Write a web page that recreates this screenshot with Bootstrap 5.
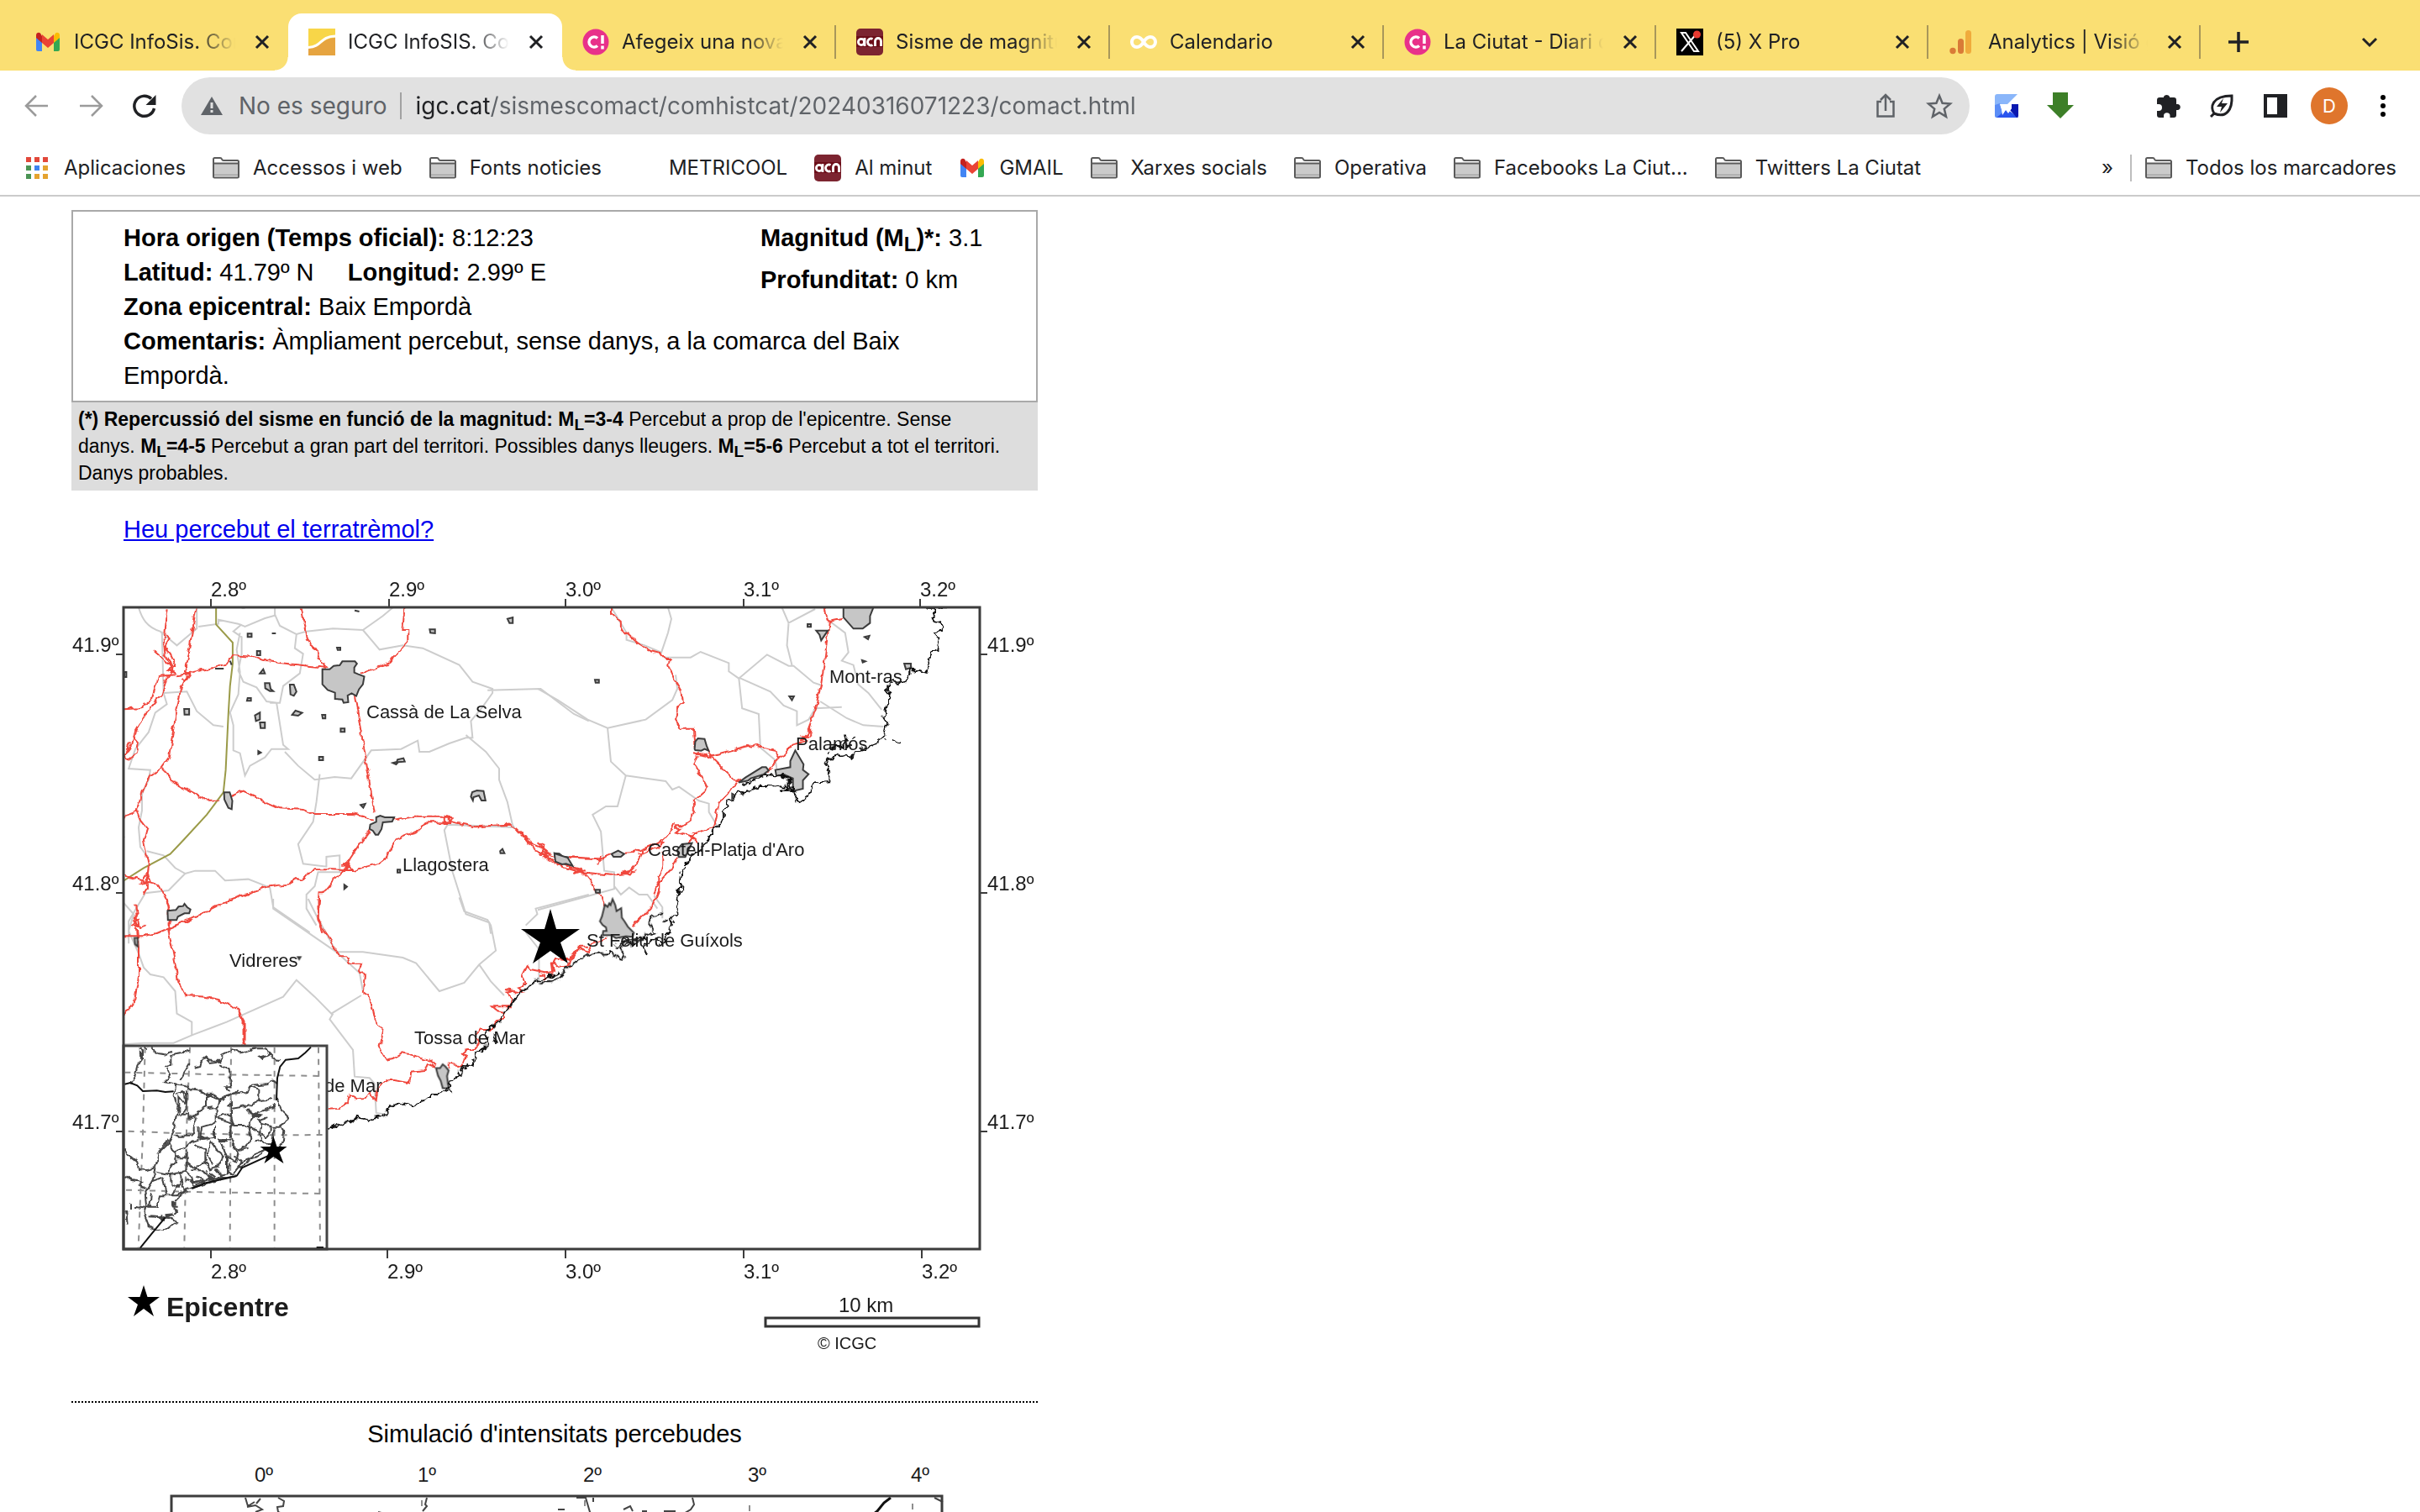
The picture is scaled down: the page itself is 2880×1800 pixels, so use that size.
<!DOCTYPE html>
<html lang="ca">
<head>
<meta charset="utf-8">
<meta name="viewport" content="width=device-width, initial-scale=1">
<title>ICGC InfoSIS. Comunicat</title>
<link href="https://cdn.jsdelivr.net/npm/bootstrap@5.3.0/dist/css/bootstrap.min.css" rel="stylesheet">
<script src="https://cdn.jsdelivr.net/npm/bootstrap@5.3.0/dist/js/bootstrap.bundle.min.js"></script>
<style>
  body { font-family: Inter, Roboto, sans-serif; font-size: 24px; color: #202124; background: #fff; }
  svg { display: block; flex-shrink: 0; }
  button { border: 0; background: none; padding: 0; color: inherit; }
  .ico { width: 32px; height: 32px; }

  /* tab strip */
  .tabstrip { background: #fadf73; height: 84px; padding: 16px 0 0 17px; }
  .tab { position: relative; width: 326px; height: 68px; padding: 0 15px 0 24px; gap: 16px; flex: 0 1 auto; }
  .tab:nth-child(n+6) { width: 324px; }
  .tab-link { flex: 1 1 0; min-width: 0; gap: 15px; color: #202124; text-decoration: none; }
  .tab-label { flex: 1 1 0; min-width: 0; overflow: hidden; white-space: nowrap; line-height: 32px;
    -webkit-mask-image: linear-gradient(to right, #000 76%, transparent); mask-image: linear-gradient(to right, #000 76%, transparent); }
  .tab.lined::after { content: ""; position: absolute; right: 0; top: 14px; width: 2px; height: 40px; background: #a8975a; }
  .tab.current { background: #fff; border-radius: 16px 16px 0 0; }
  .tab.current::before, .tab.current::after { content: ""; position: absolute; bottom: 0; width: 16px; height: 16px; }
  .tab.current::before { left: -16px; background: radial-gradient(circle at 0 0, transparent 15px, #fff 16px); }
  .tab.current::after { right: -16px; background: radial-gradient(circle at 100% 0, transparent 15px, #fff 16px); }
  .newtab { width: 90px; }
  .tabmenu { padding-right: 44px; }

  /* toolbar */
  .toolbar { height: 84px; padding: 0 12px; }
  .tool { width: 64px; height: 64px; display: flex; align-items: center; justify-content: center; }
  .omnibox { background: #e1e1e1; height: 68px; border-radius: 34px; padding: 0 4px 0 20px; margin: 0 12px; min-width: 0; }
  .security { color: #5f6368; gap: 16px; font-size: 28px; padding-right: 16px; border-right: 2px solid #a2a2a2; line-height: 32px; }
  .address { flex: 1 1 0; min-width: 0; border: 0; outline: 0; padding: 0; margin-left: 16px; font-size: 28px; line-height: 40px;
    background: linear-gradient(to right, #202124 88px, #5f6368 88px); -webkit-background-clip: text; background-clip: text; -webkit-text-fill-color: transparent; }
  .avatar { width: 44px; height: 44px; border-radius: 50%; background: #df752c; color: #fff; font-size: 22px; line-height: 44px; text-align: center; }

  /* bookmarks */
  .bookmarks { height: 66px; padding: 0 28px; gap: 32px; border-bottom: 2px solid #cbcbcb; }
  .mark-link { gap: 16px; color: #202124; text-decoration: none; white-space: nowrap; line-height: 32px; }
  .all-marks { border-left: 2px solid #bdbdbd; padding-left: 16px; margin-left: -12px; }

  /* report */
  .report { font-family: "Liberation Sans", Arial, sans-serif; font-size: 29px; line-height: 41px; color: #000; max-width: 1150px; margin: 16px 0 0 85px; }
  .report sub { font-size: 24px; bottom: -6px; }
  .facts { border: 2px solid #a9a9a9; padding: 11px 60px 9px; }
  .facts p { margin: 0; }
  .second { width: 268px; gap: 9px; }
  .scale-note { background: #ddd; font-size: 23px; line-height: 32px; padding: 4px 8px 5px; margin: 0; }
  .scale-note sub { font-size: 19px; bottom: -5px; }
  .report a { color: #0000ee; }
  .felt { margin: 26px 0 29px 62px; }
  .report svg { width: 100%; height: auto; }
  .report svg text { font-family: "Liberation Sans", Arial, sans-serif; fill: #1c1c1c; }
  .simulation { border-top: 2px dotted #000; margin-top: 48px; padding-top: 17px; text-align: center; }
  .simulation h2 { font-size: 29px; line-height: 41px; font-weight: 400; margin: 0 0 10px; }
  .axis { font-size: 24px; }
  .town { font-size: 22px; }
  .ln path { fill: none; vector-effect: non-scaling-stroke; }
  .com path { stroke: #cdcdcd; stroke-width: 2; }
  .road path { stroke: #f0463c; stroke-width: 2; }
  .rail path { stroke: #9a9a48; stroke-width: 2; }
  .coast path { stroke: #111; stroke-width: 2; }
  .urban path { fill: #c6c6c6; stroke: #3c3c3c; stroke-width: 2; }
  .inner path { stroke: #444; stroke-width: 2; }
  .grid-dash path { stroke: #8e8e8e; stroke-width: 2; stroke-dasharray: 7 7; }
</style>
</head>
<body>
<svg width="0" height="0" class="position-absolute" aria-hidden="true">
  <defs>
    <filter id="ragged" x="0" y="0" width="1" height="1"><feTurbulence type="fractalNoise" baseFrequency=".12" numOctaves="2" seed="4" result="n"/><feDisplacementMap in="SourceGraphic" in2="n" scale="11" xChannelSelector="R" yChannelSelector="G"/></filter>
    <filter id="uneven" x="0" y="0" width="1" height="1"><feTurbulence type="fractalNoise" baseFrequency=".1" numOctaves="2" seed="9" result="n"/><feDisplacementMap in="SourceGraphic" in2="n" scale="7" xChannelSelector="R" yChannelSelector="G"/></filter>
    <symbol id="i-x" viewBox="0 0 32 32"><path d="M9 9l14 14M23 9L9 23" stroke="#202124" stroke-width="3" fill="none"/></symbol>
    <symbol id="i-gmail" viewBox="0 0 32 32">
      <path d="M2 10v15a2 2 0 0 0 2 2h5V14z" fill="#4285f4"/><path d="M30 10v15a2 2 0 0 1-2 2h-5V14z" fill="#34a853"/>
      <path d="M23 9v8l7-6V8c0-3-3-4-5-2.500z" fill="#fbbc04"/><path d="M9 9v8l-7-6V8c0-3 3-4 5-2.500z" fill="#c5221f"/><path d="M9 17V7l7 6 7-6v10l-7 6z" fill="#ea4335"/>
    </symbol>
    <symbol id="i-icgc" viewBox="0 0 32 32"><path d="M0 0h32v32H0z" fill="#f8d648"/><path d="M0 23c18-1 14-11 32-12v21H0z" fill="#e6a440"/><path d="M0 22.500c17-1 13-13 32-13.500" stroke="#fff" stroke-width="3" fill="none"/></symbol>
    <symbol id="i-ciutat" viewBox="0 0 32 32"><circle cx="16" cy="16" r="15.500" fill="#e8318a"/><path d="M18 11.500a6 6 0 1 0 0 9" stroke="#fff" stroke-width="3.500" fill="none"/><path d="M24 8v10M24 20.500v4" stroke="#fff" stroke-width="3.500"/></symbol>
    <symbol id="i-acn" viewBox="0 0 32 32"><rect width="32" height="32" rx="5" fill="#7c2430"/><path d="M0 9h32v13H0z" fill="#6b0d18"/><g stroke="#fff" stroke-width="2.800" fill="none"><circle cx="6" cy="16" r="3.600"/><path d="M10 11v10M19.500 12.500a4 4 0 1 0 0 7M22.500 21v-6a3.400 3.400 0 0 1 7 0v6"/></g></symbol>
    <symbol id="i-inf" viewBox="0 0 32 32"><path d="M16 16c-3-5-5-6-8-6a6 6 0 0 0 0 12c3 0 5-1 8-6s5-6 8-6a6 6 0 0 1 0 12c-3 0-5-1-8-6z" fill="none" stroke="#fff" stroke-width="4"/></symbol>
    <symbol id="i-xpro" viewBox="0 0 32 32"><path d="M0 0h32v32H0z"/><path d="M6 5h5l15 22h-5zM25 5L6 27" fill="none" stroke="#fff" stroke-width="2"/><circle cx="24.500" cy="7" r="4.500" fill="#e83a30"/></symbol>
    <symbol id="i-ga" viewBox="0 0 32 32"><rect x="20" y="2" width="7" height="28" rx="3.500" fill="#f0ab3c"/><rect x="11" y="12" width="7" height="18" rx="3.500" fill="#d97b37"/><circle cx="5" cy="26.500" r="3.700" fill="#d97b37"/></symbol>
    <symbol id="i-folder" viewBox="0 0 32 32"><path d="M1 26V4h9l4 4h17v18z" fill="#fff"/><path d="M2 11h28v14H2z" fill="#cbcbcb"/><path d="M1 10.500h30M1 24V5.500q0-1.500 1.500-1.500H9q1.500 0 2 1.500t2 1.500h16.500Q31 7 31 8.500V26q0 1.500-1.500 1.500h-27Q1 27.500 1 26z" fill="none" stroke="#5a5a5a" stroke-width="2"/><path d="M2 24.500h28" stroke="#a5a5a5" stroke-width="2"/></symbol>
  </defs>
</svg>

<div class="d-flex flex-column vh-100 overflow-hidden">
<header>
  <nav class="tabstrip d-flex" aria-label="Pestanyes">
    <div class="tab d-flex align-items-center"><a href="#" class="tab-link d-flex align-items-center"><svg class="ico"><use href="#i-gmail"/></svg><span class="tab-label">ICGC InfoSis. Comunicat</span></a><button aria-label="Tanca"><svg class="ico"><use href="#i-x"/></svg></button></div>
    <div class="tab current d-flex align-items-center"><a href="#" class="tab-link d-flex align-items-center"><svg class="ico"><use href="#i-icgc"/></svg><span class="tab-label">ICGC InfoSIS. Comunicat</span></a><button aria-label="Tanca"><svg class="ico"><use href="#i-x"/></svg></button></div>
    <div class="tab lined d-flex align-items-center"><a href="#" class="tab-link d-flex align-items-center"><svg class="ico"><use href="#i-ciutat"/></svg><span class="tab-label">Afegeix una nova entrada</span></a><button aria-label="Tanca"><svg class="ico"><use href="#i-x"/></svg></button></div>
    <div class="tab lined d-flex align-items-center"><a href="#" class="tab-link d-flex align-items-center"><svg class="ico"><use href="#i-acn"/></svg><span class="tab-label">Sisme de magnitud</span></a><button aria-label="Tanca"><svg class="ico"><use href="#i-x"/></svg></button></div>
    <div class="tab lined d-flex align-items-center"><a href="#" class="tab-link d-flex align-items-center"><svg class="ico"><use href="#i-inf"/></svg><span class="tab-label">Calendario</span></a><button aria-label="Tanca"><svg class="ico"><use href="#i-x"/></svg></button></div>
    <div class="tab lined d-flex align-items-center"><a href="#" class="tab-link d-flex align-items-center"><svg class="ico"><use href="#i-ciutat"/></svg><span class="tab-label">La Ciutat - Diari digital</span></a><button aria-label="Tanca"><svg class="ico"><use href="#i-x"/></svg></button></div>
    <div class="tab lined d-flex align-items-center"><a href="#" class="tab-link d-flex align-items-center"><svg class="ico"><use href="#i-xpro"/></svg><span class="tab-label">(5) X Pro</span></a><button aria-label="Tanca"><svg class="ico"><use href="#i-x"/></svg></button></div>
    <div class="tab lined d-flex align-items-center"><a href="#" class="tab-link d-flex align-items-center"><svg class="ico"><use href="#i-ga"/></svg><span class="tab-label">Analytics | Visió general</span></a><button aria-label="Tanca"><svg class="ico"><use href="#i-x"/></svg></button></div>
    <button class="newtab d-flex align-items-center justify-content-center" aria-label="Pestanya nova"><svg class="ico" viewBox="0 0 32 32"><path d="M16 4v24M4 16h24" stroke="#202124" stroke-width="3.500"/></svg></button>
    <button class="tabmenu ms-auto" aria-label="Cerca pestanyes"><svg class="ico" viewBox="0 0 32 32"><path d="M8 12l8 8 8-8" stroke="#202124" stroke-width="3" fill="none"/></svg></button>
  </nav>

  <div class="toolbar d-flex align-items-center">
    <button class="tool" aria-label="Enrere"><svg class="ico" viewBox="0 0 32 32"><path d="M29 16H4M15 4L3 16l12 12" stroke="#9b9b9b" stroke-width="2.500" fill="none"/></svg></button>
    <button class="tool" aria-label="Endavant"><svg class="ico" viewBox="0 0 32 32"><path d="M3 16h25M17 4l12 12-12 12" stroke="#9b9b9b" stroke-width="2.500" fill="none"/></svg></button>
    <button class="tool" aria-label="Actualitza"><svg class="ico" viewBox="0 0 32 32"><path d="M27.500 19A12 12 0 1 1 24 7.500" stroke="#202124" stroke-width="3.500" fill="none"/><path d="M29.500 3v12h-12z" fill="#202124"/></svg></button>
    <form class="omnibox d-flex align-items-center flex-grow-1" onsubmit="return false">
      <button type="button" class="security d-flex align-items-center"><svg class="ico" viewBox="0 0 32 32"><path d="M16 5l13 22H3z" fill="#5f6368"/><path d="M16 12v7M16 21v3" stroke="#e1e1e1" stroke-width="3"/></svg>No es seguro</button>
      <input class="address" type="text" aria-label="Adreça" value="igc.cat/sismescomact/comhistcat/20240316071223/comact.html">
      <button type="button" class="tool" aria-label="Comparteix"><svg class="ico" viewBox="0 0 32 32"><path d="M11 11H6.500v17.500h19V11H21M16 22V4M10 9l6-6 6 6" stroke="#5f6368" stroke-width="2.500" fill="none"/></svg></button>
      <button type="button" class="tool" aria-label="Adreça d'interès"><svg class="ico" viewBox="0 0 32 32"><path d="M16 4l3.600 8.700 9.400.8-7.200 6.100 2.200 9.200-8-4.900-8 4.900 2.200-9.200L3 13.500l9.400-.8z" stroke="#5f6368" stroke-width="2.500" fill="none"/></svg></button>
    </form>
    <button class="tool" aria-label="Extensió"><svg class="ico" viewBox="0 0 32 32"><path d="M2 5q0-3 3-3h24L17 14H9L2 19z" fill="#8ab6fa"/><path d="M2 15l6-2 4 14-6 3H4q-2 0-2-2z" fill="#5b8df6"/><path d="M4 30l12-10 6 4 8 6z" fill="#2a55ee"/><path d="M20 14h10v14q0 2-2 2l-8-9 2-2z" fill="#0a18b0"/><path d="M8 14h10l4 0 0 5-4 6-3-4-4 6-1-7z" fill="#fff"/></svg></button>
    <button class="tool" aria-label="Baixades"><svg class="ico" viewBox="0 0 32 32"><path d="M7 0h18v15h7L16 31 0 15h7z" fill="#3d7f28"/></svg></button>
    <span class="tool"></span>
    <button class="tool" aria-label="Extensions"><svg class="ico" viewBox="0 0 32 32"><path d="M28 14h-2V9q0-3-3-3h-5V5a4 4 0 0 0-7 0v1H6Q3 6 3 9v5h2a4 4 0 0 1 0 8H3v5q0 3 3 3h5v-2a3.700 3.700 0 0 1 7.500 0v2H23q3 0 3-3v-6h2a3.600 3.600 0 0 0 0-7z" fill="#202124"/></svg></button>
    <button class="tool" aria-label="Estalvi d'energia"><svg class="ico" viewBox="0 0 32 32"><path d="M3 29l4-4C2 18 4 4 28 4c1 17-7 27-21 21" stroke="#202124" stroke-width="3" fill="none"/><path d="M18 7l-8 10h6l-2 7 9-11h-7z" fill="#202124"/></svg></button>
    <button class="tool" aria-label="Tauler lateral"><svg class="ico" viewBox="0 0 32 32"><path d="M4 4h24v24H4z" fill="none" stroke="#202124" stroke-width="4"/><path d="M18 3h11v26H18z" fill="#202124"/></svg></button>
    <button class="tool" aria-label="Perfil"><span class="avatar">D</span></button>
    <button class="tool" aria-label="Menú"><svg class="ico" viewBox="0 0 32 32"><circle cx="16" cy="6" r="3"/><circle cx="16" cy="16" r="3"/><circle cx="16" cy="26" r="3"/></svg></button>
  </div>

  <nav class="bookmarks d-flex align-items-center" aria-label="Marcadores">
    <a href="#" class="mark-link d-flex align-items-center"><svg class="ico" viewBox="0 0 32 32"><path d="M3 3h6v6H3zM13 3h6v6h-6zM23 3h6v6h-6z" fill="#e2483a"/><path d="M3 13h6v6H3zM3 23h6v6H3z" fill="#4b9454"/><path d="M13 13h6v6h-6z" fill="#3f82ee"/><path d="M23 13h6v6h-6zM13 23h6v6h-6zM23 23h6v6h-6z" fill="#e5a32f"/></svg>Aplicaciones</a>
    <a href="#" class="mark-link d-flex align-items-center"><svg class="ico"><use href="#i-folder"/></svg>Accessos i web</a>
    <a href="#" class="mark-link d-flex align-items-center"><svg class="ico"><use href="#i-folder"/></svg>Fonts noticies</a>
    <a href="#" class="mark-link d-flex align-items-center"><span class="ico"></span>METRICOOL</a>
    <a href="#" class="mark-link d-flex align-items-center"><svg class="ico"><use href="#i-acn"/></svg>Al minut</a>
    <a href="#" class="mark-link d-flex align-items-center"><svg class="ico"><use href="#i-gmail"/></svg>GMAIL</a>
    <a href="#" class="mark-link d-flex align-items-center"><svg class="ico"><use href="#i-folder"/></svg>Xarxes socials</a>
    <a href="#" class="mark-link d-flex align-items-center"><svg class="ico"><use href="#i-folder"/></svg>Operativa</a>
    <a href="#" class="mark-link d-flex align-items-center"><svg class="ico"><use href="#i-folder"/></svg>Facebooks La Ciut...</a>
    <a href="#" class="mark-link d-flex align-items-center"><svg class="ico"><use href="#i-folder"/></svg>Twitters La Ciutat</a>
    <button class="ms-auto" aria-label="Més marcadors">»</button>
    <a href="#" class="mark-link all-marks d-flex align-items-center"><svg class="ico"><use href="#i-folder"/></svg>Todos los marcadores</a>
  </nav>
</header>

<main class="report w-100">
  <section class="facts">
    <div class="d-flex justify-content-between">
      <div>
        <p><b>Hora origen (Temps oficial):</b> 8:12:23</p>
        <p><b>Latitud:</b> 41.79º N &nbsp;&nbsp;&nbsp; <b>Longitud:</b> 2.99º E</p>
        <p><b>Zona epicentral:</b> Baix Empordà</p>
      </div>
      <div class="second d-flex flex-column text-nowrap">
        <p><b>Magnitud (M<sub>L</sub>)*:</b> 3.1</p>
        <p><b>Profunditat:</b> 0 km</p>
      </div>
    </div>
    <p><b>Comentaris:</b> Àmpliament percebut, sense danys, a la comarca del Baix Empordà.</p>
  </section>
  <p class="scale-note"><b>(*) Repercussió del sisme en funció de la magnitud: M<sub>L</sub>=3-4</b> Percebut a prop de l'epicentre. Sense<br>danys. <b>M<sub>L</sub>=4-5</b> Percebut a gran part del territori. Possibles danys lleugers. <b>M<sub>L</sub>=5-6</b> Percebut a tot el territori.<br>Danys probables.</p>
  <p class="felt"><a href="#">Heu percebut el terratrèmol?</a></p>

  <svg viewBox="85 680 1150 940" role="img" aria-label="Mapa de l'epicentre">
    <clipPath id="frame"><path d="M147 723h1019v764H147z"/></clipPath>
    <g clip-path="url(#frame)">
      <g class="ln com">
        <g transform="translate(80 670) scale(.3954 .3333)">
          <path d="M215 160c10 40 25 70 65 85l50 50 60-60 0-70M285 245l5 220 10 40-35 30-20 70-40 60-20 70 65 5-5 35-20 50 0 60-10 60 5 70 25 40M395 228l60-10 0-15 60 15 20 10 60-30 30-10 0-30M240 1030l50 15 35 45 30 20-50 60-70 10-30 60-20 40 0 80M355 1110l30-10 60 0 30 35 70-5 65 30 10 70 110 90"/>
          <path d="M290 465l70-5 30 70 50 50 30 5M525 220l-25 25 25 20 0 60-10 60 15 40 40 20 30 50 30 5 20 150 15 15-50 0-20 30-45 30-15 35-15-80-20-10 0-90-10-45 25-65 5-80-10-80 10-60M625 185l15 40 50 30-5 50 25 20-10 70-50 45-10 60-30 0"/>
          <path d="M690 255l30-10 80-10 90 5 60-50 30-30M890 240l50 70 70-15 60 10 110 60 40 60 60 25 0 15-30 50-35 50 5 60-20 0-50 20-60 30-30 0-5-40-50 30-90 5-60 100-50-5-60 10-50-50-40-50M1265 455l160-5 100 90 45 25M1200 615l60 60 40 60 0 40 25 80 15 80 5 10-200-10-10 20 25 150 40 150 70 30 5 40M760 755l-10 100-10 70-45 80 15 70 70 10 0-35 40-5 0 60-65 0-10 50-25 30 0 50 30 60M1570 1185l-160 50 5 20-35 40"/>
        </g>
        <g transform="translate(640 670) scale(.3954 .3333)">
          <path d="M222 160l45 90 0 25 55 20 50 25 20-70 10-50-10-40M380 338l80 0 30-20 85 40 0 30 30 25 85-85 65 40 15 0 60 60 25 10M735 160l20 55 80-50M755 215l-5 80 15 70M605 410l10 110 50 20 5 120 45 45 5 35M605 410l95 50 40 50 40 20 0 50 35-20 20-40 80-5M850 495l80 60 50 25 60 5M880 210l45 40 10 70-20 30 35 15 15 70 30 30 40 60M415 400l5 50-15 40-80 70-115 30-60-30-90-70-60-40M210 590l10 120 45 50 120 20 20 30 20-10 60 50 30 10 0 30 25 50M265 760l-25 110-35 0-40 30 25 60 10 140 30 5 0 60-230 75M230 1155l20 30 25-25 30 25 25 0 30 50M350 1190l25 40 0 40"/>
        </g>
        <g transform="translate(80 1070) scale(.3954 .3333)">
          <path d="M170 15l30 40-15 60 30 80 15 50 20 25 40 10 35 50 5 80 45 30 0 45M170 520l60-5 90 0 60-30 100-45 170-90 40-60 55 60 50 60 90-65M620 0l0 35 190 155 70 75 10 65M725 0l25 60 60 130 80 0 120 20 40 20 70 100 75-30 45-65 50-50-15-90-10-20-70-30-15-50M1240 235l35 60 40 50M800 410l-10 20 70 110 5 95 45 5 15 20 5 105 30 5M1380 120l40 60 0 110"/>
        </g>
      </g>
      <g class="ln rail">
        <g transform="translate(80 670) scale(.3954 .3333)"><path d="M448 160v60l50 65v75l-8 80-5 100-8 200-7 80-50 80-70 90-40 50-80 50-70 53"/></g>
      </g>
      <g class="ln road" filter="url(#uneven)">
        <g transform="translate(80 670) scale(.3954 .3333)">
          <path d="M300 160l-10 110 5 60 25 50-20 30-15 60-50 70-30 60-10 50-25 40M170 523l50-3 35-35 20-80 50-5M260 313l50 55 15 30M295 255l15 15-15 30 30 70-20 15 20 10M388 160l-12 90-20 120 5 35-20 50-20 130-15 110-25 40-35 25-20 60-10 50-10 20-35 15M205 880l15 40 20 30-10 40 15 90-5 50M285 735l50 60 85 53 40 0M490 835l40-20 60 35 50 27 70 5 30 15 120 0 60 20M330 400l50-10 60-15 45-15 15-30 50 5 40 15 110 15 85 10M350 385l20 15-15 25-10-15M705 160l15 110 30 50 30 55M1015 160l-5 80 15 0 0 45-60 75-60 25-20 10M865 475l20 130 20 140 20 150M980 920l60-12 110 0 0 15 80 20 100-8 20 12 60 80 40 25M1350 945l50 60 40 20 15 15-30 0 10-30-20-10M1510 1050l60 5M1135 905l25 5-10 20-15 0zM1150 928l-70 0-20 25-70 35-30 65-20 20-80 25-60-5-60 0-30 40-20-5-30 20-60 10-50 20-60 25-120 70-100 50-40 10-70 0-60-15-30 0M910 955l-30 50-50 90-60 85-10 0-5 90 15 50M170 1118l65 20 40 10 30 70 0 100M240 1110l10 30-30 5 20-40 0 60-10 20M205 1220l5 40-10 20 20 20-30-10M200 620l15 20-5 40-25 20-15-10 20-50M1430 1030l60 40 40 20 30 10M825 1080l20-5 10 20-20 0 10-15"/>
        </g>
        <g transform="translate(640 670) scale(.3954 .3333)">
          <path d="M220 160l0 20 30 30 0 25 50 50 40 30 30 10 15 20 15 0-5 20 15 50 20 40 5 40-15 20-5 50 15 28 40 0 5 65M520 690l0 10-10-10-40-8M520 690l60-20 60-18 20 0 15 10 40 10 15 25M510 665l20 40 70 80M595 783l-20 40-30 40-10 60-5 20-60 25-15 35M595 783l65-30 30-10 20-5M690 745l45-55 30-40 50-15M862 160l15 50 40-10M877 210l-10 100-5 50-10 80-15 70-20 90-10 20 5 0-20 15 10-5M820 590l0 30-20 0 20-25M475 680l35 5M480 690l-10 30 20 40 20 45-20 20-20 25 0 40-10 30-25 20-20 0 0 10 15 0-15 15 15 5 35 10 15 15M410 930l-5 20-30 40-40 25-50 20-60 5-40 20-90-5M180 1075l10-30M0 1000l30 40-30 0M0 1030l60 50 70 25 90 10 50-5 30-40 20-50M250 1110l40-10-10 15-20-10M300 1030l40-20 20-10 20 0-20 15-40 20-20 5M95 1085l40 15-25 10 20-20M140 1110l20 30 5 25 25 20 10 40 10 40M375 1030l0 50-10 40 0 50-10 30-20 40-50 60M420 1055l-15 35-40 50-15 40M460 965l20 5"/>
        </g>
        <g transform="translate(80 1070) scale(.3954 .3333)">
          <path d="M300 0l10 50-5 60 15 90 15 100 20 45 60 5 40 10 60 35 15 40 0 85M520 410l15 30 0 85M205 50l10 120 0 110-15 100-25 20-5 15M200 90l15-15 5 30 15-10M755 0l0 65 20 50 20 35 5 20 20 35 20 0 10 25 35 0-5 30 15 10-5 60 20 20 10 50 10 50 20 15-10 60 20 50 20-5 30-20 80 25 20 20M785 752l35-2 15-20 10 0 5-30 20 15 30-5 10-15 20 25 5-45 30-30 20 0 45 10 5-35 40-5 10-25 20 10M1145 605l0-15 45 5 10-30-15-10 15-15 30 0 10-30-10-25 15-20 30 0 20-30 20-5 0-25-20-5-15-15 40 0 15 0 5-25-20-25 20-5-20-5 50 10-10-20 20-10-10-30 15-35 10 15 40 10 30-5-5-25 10-20 40 5 30-50 30 0"/>
        </g>
        <g transform="translate(640 1050) scale(.3954 .3571)"><path d="M0 310l20 0 0 15 25-15-5-40 10 0 15 15 30-5 5-20 25-40 25 15 15-30 45-20"/></g>
      </g>
      <g class="ln urban">
        <g transform="translate(80 670) scale(.3954 .3333)">
          <path d="M768 380l22 0 12-12 18-2 8-14 38 0 6 8-8 14 0 18 12 6 18 8-4 28-12 18-8 24-14-10-12 8 2 24-14 2-4-12-22-2 0-22-22-10-16-20zM472 820l17 0 8 30-2 30-10-5-12-30zM912 935l18-10 0-16 12-6 14 6 28 0-6 15-28 3-4 24-10 20-8 0-8-14-10-6zM302 1243l25-3 8-12 14-2 4-8 8 12 10 8-4 14-14 0-20 12-4 12-26 0zM1467 1037l14 2 10 10 16 2 0 12 10 14-20-2-14-8-12-2zM1215 835l4-16 14-6 20 2 6 34-12 0-8-18-16 6-2 12zM980 715l12-4 2-8 18-5 4 12-20 2-6 8zM670 435l12 0 8 25-8 15-10-5zM677 543l10-15 20 8-12 10zM571 315h10v15h-10zM543 253h12v12h-12zM580 395l10-15 5 15zM595 430h14l3 20 8 8-10 0-14-10zM543 483h10v10h-12zM565 545l15-10 0 25-12 5zM580 570h15v20h-13zM767 543h10v13h-8zM823 592h12v12h-12zM758 693h12v12h-12zM352 522h15v20h-14zM1091 238h16l0 14-14-2zM1325 200l16-5 0 20-10 0zM812 303h10v8h-8zM616 252h12M865 170l14 4M525 160h10M445 378h26M490 350l5 15M1303 1030l7-8 6 15-12 0zM883 865l14-4-6 14zM834 1150l8 7-8 8zM994 1096h8v10h-8zM172 390h6v18h-6zM575 672l8 6-8 5z"/>
        </g>
        <g transform="translate(640 670) scale(.3954 .3333)">
          <path d="M920 160l90 0-10 30 0 25-22 20-28 0-30-40zM838 242l35 0-20 35-5-20zM472 665l2-26 8-12 20 2 6 24 6 18-12-6-10 6-18-2zM715 740l45-10 0-22 15-38 25 50-2 20 17 15-17 22 0 30-30 8 0-45-20-10-30 0zM605 785l20-18 50-37 12 0 8 12-16 14-38 14-8 8zM222 1040l20-12 18 12-10 10-22 0zM50 1038l40 15 15 30-20-8-12 2-20-10zM420 1025l14-20 30-4-10 24-10 26-20 0zM1103 360h20v15l-15 5zM812 219h10v10h-10zM757 477h14l-6 14zM172 418h12v10h-10zM984 265l14-4-4 12zM976 348l10 4-8 4zM585 825l8 5-8 15zM173 1168h14v10h-12z"/>
        </g>
        <g transform="translate(640 1050) scale(.3954 .3571)"><path d="M202 75l8 8 5-12 4 6 6-20 8 20 4 20 14-10 2 32 8 12 10 18 18 20-4 14-20-2-30 6-14-10-26 0 2-14 10 0-2-12-10-8-8-12 6-16z"/></g>
        <g transform="translate(80 1070) scale(.3954 .3333)"><path d="M1110 605l12 0 8-14 8 8 10 14-5 20 5 45-18-2-6-26-8-18zM202 140l10 0 0 30-8-8zM694 208l8 0-4 8z"/></g>
      </g>
      <g class="ln coast" filter="url(#ragged)">
        <g transform="translate(640 670) scale(.3954 .3333)">
          <path d="M1230 160l-50 0 15 20-5 25 15 5 10 30-25 10 15 20 0 45-20 5-5 20-10 25 5 10-10 20-40-15-5 5-10 25-10 20-40-5-5 40 3 30-10 20-5 35 8 15-10 60-30 30-45 15-20 20-20-5-50 15-10 20 10 30 0 30-45 5-15 50-30 20-10-20-10-20-10-15-90-3-30 20-30 5-35 35-10 30 0 30-35 40-20 50-45 40-30 60-10 90-5 35 5 20-15 10-10 60-25 40-20-20-30 20 5 30"/>
          <path d="M875 670l50-20 5-30M1075 638l15 3M635 790l50-35 70 10 10 40-30 10 45 5M430 1150l10 15-12 10"/>
          <path d="M755 768v50M880 655l60 5M730 815h45M615 790l40-20" stroke-width="5"/>
        </g>
        <g transform="translate(640 1050) scale(.3954 .3571)"><path d="M375 105l-35 5-5 30 15 25-25 10-15 20-60 20 10 35-15 10-20-25-70 5-60 40-30 35-20 20-46 4M230 215l60-25 40-5"/><path d="M250 190l45 12M380 128l12 2M68 305v16" stroke-width="4"/></g>
        <g transform="translate(80 1070) scale(.3954 .3333)"><path d="M785 825l20-10 45-20 20-15 25 5 10 15 15-15 30-5 15-25 30-30 30 10 15 10 30-20 20-20 25 0 30-30 10-25 30-20 5-30 30-10 10-40 30-20 5-60 25-20 40-65 60-80 60-25 30-15"/><path d="M1250 540v15M1285 490l10 25M1135 680l20 8M1215 570v25M1175 620l0 15M870 785l-20 15" stroke-width="4"/></g>
      </g>
      <text x="138" y="1000" class="town">s</text>
      <g class="town">
        <text x="436" y="855">Cassà de La Selva</text><text x="479" y="1037">Llagostera</text><text x="273" y="1151">Vidreres</text><text x="493" y="1243">Tossa de Mar</text><text x="386" y="1300">de Mar</text>
        <text x="987" y="813">Mont-ras</text><text x="947" y="893">Palamós</text><text x="771" y="1019">Castell-Platja d'Aro</text><text x="698" y="1127">St Feliu de Guíxols</text>
      </g>
      <path d="M655 1082l7 24h28l-23 16 9 25-21-15-21 15 9-25-23-16h28z"/>
    </g>

    <!-- location inset -->
    <path d="M147 1245h242v242H147z" fill="#fff" stroke="#444" stroke-width="3"/>
    <g class="ln grid-dash" transform="translate(140 1240) scale(.3333)">
      <path d="M25 110l310 7 400 6M38 320l170 7 360 7 170-1M30 530l290 8 420 5M98 20L90 330 74 735M258 20l-12 300-8 415M405 20l-4 715M560 20v715M717 20l6 715"/>
    </g>
    <g filter="url(#uneven)"><g class="ln inner" transform="translate(140 1240) scale(.3333)">
      <path d="M80 25l10 5 0 30-20 25-5 30-20 30 8 10M95 20l10 5M120 22l25 20 30 5 20-12M165 95l25-15 0-25 15-15 30-5 20 5M178 95l10 20-20 30 30 5M258 80l-15 25-20 30M275 95l20-5 5-20 15-10-20 15M310 50l20 25 40-5 0-20 20-10 20-15 30 15 30-10 20-5M300 55l30 10 40 0M470 30l30-5 30 0 10 20-30 10 10 10M500 50l20 10 20-20 15 25 25 5M365 80l30 20 8 60-18 0 20 20"/>
      <path d="M200 150l40 5 20 15 45 10 15 10 40 15 50-15 50-10 20-25 55-5 15-10 20 10M205 150l-5 40 15 40-10 60-5 30-20 40-40 40 5 30-10 30-10 35-25 40 5 50-10 30 15 40 30 20 40-5 30-25-25-15-75-5M210 190l30-10 5 60-15 20 20 0 0 15 25-10 0 60-10 10-65 0M250 170l-5 60-25-30 0 60M275 265l20-20 20-10 0-35 30-12 20 15-5 30-40 5M315 190l25 0M350 235l0 50-15 10-35 10-5 40 10 5 40-5 0-45M350 270l30-10 25 0 0-40-10 15M355 345l45 5 10-60-50-15M360 210l40-15 30-20M405 240l60-10 40-20 0-40-30-10M405 260l10 40 50 0 20-30-20-30M460 240l20 20 25-10 60-20M505 210l50-5M480 260l30 5-20 10zM465 300l15 10 30 15 10-30-15-15 30-10M510 325l20 15 15-15 0-25-30-10M405 300l5 60 20 25 30-10 15-30-5-40M570 200l15 40 10 15 15 15-15 20-15 10 15 20-5 40-15 20M580 305l-30 0M560 310l-10 60M505 325l5 25-20 5M510 350l30 20 15-10"/>
      <path d="M180 355l20 40 40-15 20-20 30-10 0-50M205 390l0 35-30 50M205 415l40 0 0-30M245 415l0 50-60 10-45-10M245 465l20 20 5 20 50-10M245 430l30 25 40-30-5-40-30-20M310 385l0 50 20 20 30-10 20-35-30-25-20-30M330 360l-10 40 20 40M300 350l30-5M370 360l20 50 0 60-20 10M390 410l30 20 10-30-20-40M400 430l-10 30 20 15 20-25 10-30-25-10M430 390l40-10M430 450l30-15 30-35 45-15M440 430l60-20 30-20M190 475l0 35 20 10-20 30-30 0M225 470l5 50 20 15M240 490l30 10M265 460l40 0 20 20-15 20-30-20M315 455l10 40 50-10-25-30M120 500l40-15 15 60M120 540l-5 50 25 0 10-40 60 0 20-10M260 500l15 20 100-30 50-10"/>
      <path d="M25 385l20 25 25 20 5 25 30 5 30-10M25 483l25 12 35 5-5 15 20 10M30 600l5 50M45 580v20M60 590l30 5 30-10M250 525l60-25M205 570l45-45M205 575l-5 15 15 0M330 470l20 15M200 595l15 10-10 10"/>
      <path d="M315 190h25M480 265h25M170 620l30-3M195 580h14M150 625l20 10M85 35v30M210 520h15M320 480l25 15M295 345h30M360 350h30" style="stroke-width:5"/>
    </g></g>
    <g class="ln coast" transform="translate(140 1240) scale(.3333)">
      <path d="M690 20l-20 20-25 20-45 5-20 25-10 40-3 80M25 152l20-5 25 10 20 20 50-2 30 5 30-2M80 738l40-50 50-60M425 480l20-30 110-50M265 525l50-20 110-25M710 735h25"/>
    </g>
    <path d="M325.500 1353l4 12h12l-9 7 5 13-12-8-11 8 5-13-10-7h12z"/>

    <path d="M147 723h1019v764H147z" fill="none" stroke="#3c3c3c" stroke-width="3"/>
    <path d="M251 713v10M463 713v10M673 713v10M885 713v10M1095 713v10M251 1488v10M461 1488v10M673 1488v10M885 1488v10M1097 1488v10M138 779h9M138 1063h9M138 1347h9M1166 779h9M1166 1063h9M1166 1347h9" stroke="#3c3c3c" stroke-width="2"/>
    <g class="axis">
      <text x="251" y="710">2.8º</text><text x="463" y="710">2.9º</text><text x="673" y="710">3.0º</text><text x="885" y="710">3.1º</text><text x="1095" y="710">3.2º</text>
      <text x="251" y="1522">2.8º</text><text x="461" y="1522">2.9º</text><text x="673" y="1522">3.0º</text><text x="885" y="1522">3.1º</text><text x="1097" y="1522">3.2º</text>
      <text x="86" y="776">41.9º</text><text x="86" y="1060">41.8º</text><text x="86" y="1344">41.7º</text>
      <text x="1175" y="776">41.9º</text><text x="1175" y="1060">41.8º</text><text x="1175" y="1344">41.7º</text>
      <text x="998" y="1562">10 km</text>
    </g>
    <path d="M171 1530l4.500 14h14.500l-12 9 5 14-12-9-12 9 5-14-12-9h14.500z"/>
    <text x="198" y="1567" font-size="32" font-weight="700">Epicentre</text>
    <path d="M911 1569h254v10H911z" fill="#fff" stroke="#333" stroke-width="3"/>
    <text x="973" y="1606" font-size="20">© ICGC</text>
  </svg>

  <section class="simulation">
    <h2>Simulació d'intensitats percebudes</h2>
    <svg viewBox="85 1738 1150 200" role="img" aria-label="Mapa d'intensitats">
      <g class="ln grid-dash"><path d="M502 1786v150M696 1786v150M892 1792v150M1086 1790v150"/></g>
      <g class="ln inner"><path d="M292 1783l3 10 8-5M294 1794l10-2 8 5-8 3M305 1790l5-6M331 1783l7 4-1 6-7 1 1 6 10 4M508 1783l-2 8 2 2-5 6M450 1800l8 2 20-1M686 1783l12 0M697 1783l5 17 4 8M706 1783v5M664 1797l8 0M742 1797l8-4 3 6M764 1799h6M790 1799h14M824 1783l2 8-4 6-10 6M1112 1783l10 5"/></g>
      <g class="ln coast"><path d="M1060 1783l-8 6-8 10-8 6-10 20" style="stroke-width:3"/></g>
      <path d="M204 1781h917v300H204z" fill="none" stroke="#3c3c3c" stroke-width="3"/>
      <g class="axis"><text x="303" y="1764">0º</text><text x="497" y="1764">1º</text><text x="694" y="1764">2º</text><text x="890" y="1764">3º</text><text x="1084" y="1764">4º</text></g>
    </svg>
  </section>
</main>
</div>
</body>
</html>
